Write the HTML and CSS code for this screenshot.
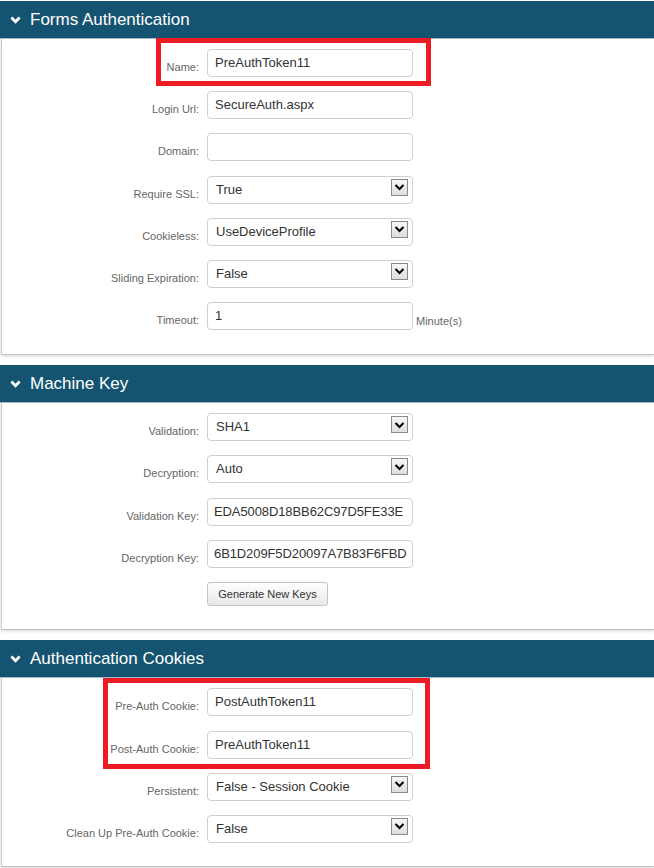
FILE: index.html
```html
<!DOCTYPE html>
<html>
<head>
<meta charset="utf-8">
<link rel="stylesheet" href="styles.css">
</head>
<body>
<div class="page">
  <section class="panel">
    <div class="panel-head">
      <svg class="chev" width="11" height="8" viewBox="0 0 11 8"><path d="M1.4 1.6 L5.5 5.7 L9.6 1.6" fill="none" stroke="#fff" stroke-width="2.8"/></svg>
      <span>Forms Authentication</span>
    </div>
    <div class="panel-body">
      <div class="row"><label class="lbl">Name:</label><div class="field">PreAuthToken11</div></div>
      <div class="row"><label class="lbl">Login Url:</label><div class="field">SecureAuth.aspx</div></div>
      <div class="row"><label class="lbl">Domain:</label><div class="field"></div></div>
      <div class="row"><label class="lbl">Require SSL:</label><div class="field select"><span class="val">True</span><span class="arrow"><svg width="15" height="14" viewBox="0 0 15 14"><path d="M3.5 5 L7.5 9 L11.5 5" fill="none" stroke="#000" stroke-width="2"/></svg></span></div></div>
      <div class="row"><label class="lbl">Cookieless:</label><div class="field select"><span class="val">UseDeviceProfile</span><span class="arrow"><svg width="15" height="14" viewBox="0 0 15 14"><path d="M3.5 5 L7.5 9 L11.5 5" fill="none" stroke="#000" stroke-width="2"/></svg></span></div></div>
      <div class="row"><label class="lbl">Sliding Expiration:</label><div class="field select"><span class="val">False</span><span class="arrow"><svg width="15" height="14" viewBox="0 0 15 14"><path d="M3.5 5 L7.5 9 L11.5 5" fill="none" stroke="#000" stroke-width="2"/></svg></span></div></div>
      <div class="row"><label class="lbl">Timeout:</label><div class="field">1</div><span class="unit">Minute(s)</span></div>
    </div>
  </section>

  <section class="panel">
    <div class="panel-head">
      <svg class="chev" width="11" height="8" viewBox="0 0 11 8"><path d="M1.4 1.6 L5.5 5.7 L9.6 1.6" fill="none" stroke="#fff" stroke-width="2.8"/></svg>
      <span>Machine Key</span>
    </div>
    <div class="panel-body">
      <div class="row"><label class="lbl">Validation:</label><div class="field select"><span class="val">SHA1</span><span class="arrow"><svg width="15" height="14" viewBox="0 0 15 14"><path d="M3.5 5 L7.5 9 L11.5 5" fill="none" stroke="#000" stroke-width="2"/></svg></span></div></div>
      <div class="row"><label class="lbl">Decryption:</label><div class="field select"><span class="val">Auto</span><span class="arrow"><svg width="15" height="14" viewBox="0 0 15 14"><path d="M3.5 5 L7.5 9 L11.5 5" fill="none" stroke="#000" stroke-width="2"/></svg></span></div></div>
      <div class="row"><label class="lbl">Validation Key:</label><div class="field key">EDA5008D18BB62C97D5FE33E</div></div>
      <div class="row"><label class="lbl">Decryption Key:</label><div class="field key">6B1D209F5D20097A7B83F6FBD</div></div>
      <div class="row"><span class="lbl"></span><button class="btn">Generate New Keys</button></div>
    </div>
  </section>

  <section class="panel">
    <div class="panel-head">
      <svg class="chev" width="11" height="8" viewBox="0 0 11 8"><path d="M1.4 1.6 L5.5 5.7 L9.6 1.6" fill="none" stroke="#fff" stroke-width="2.8"/></svg>
      <span>Authentication Cookies</span>
    </div>
    <div class="panel-body">
      <div class="row"><label class="lbl">Pre-Auth Cookie:</label><div class="field">PostAuthToken11</div></div>
      <div class="row"><label class="lbl">Post-Auth Cookie:</label><div class="field">PreAuthToken11</div></div>
      <div class="row"><label class="lbl">Persistent:</label><div class="field select"><span class="val">False - Session Cookie</span><span class="arrow"><svg width="15" height="14" viewBox="0 0 15 14"><path d="M3.5 5 L7.5 9 L11.5 5" fill="none" stroke="#000" stroke-width="2"/></svg></span></div></div>
      <div class="row"><label class="lbl">Clean Up Pre-Auth Cookie:</label><div class="field select"><span class="val">False</span><span class="arrow"><svg width="15" height="14" viewBox="0 0 15 14"><path d="M3.5 5 L7.5 9 L11.5 5" fill="none" stroke="#000" stroke-width="2"/></svg></span></div></div>
    </div>
  </section>

  <div class="mark mark-1"></div>
  <div class="mark mark-2"></div>
</div>
</body>
</html>
```

FILE: styles.css
```css
html, body {
  margin: 0;
  padding: 0;
  background: #fff;
  overflow: hidden;
}

.page {
  position: relative;
  padding: 1px 0 0 1px;
  font-family: "Liberation Sans", Arial, sans-serif;
}

.panel {
  margin-bottom: 10px;
}

.panel:nth-of-type(2) {
  margin-bottom: 10.5px;
}

.panel-head {
  height: 37px;
  background: #155470;
  border-bottom: 1px solid #a9bfca;
  color: #fff;
  font-size: 17px;
  display: flex;
  align-items: center;
  padding-left: 10px;
  margin-left: -1px;
}

.panel-head .chev {
  margin-right: 9px;
  margin-top: 1px;
}

.panel-body {
  border-left: 1px solid #c9c9c9;
  border-bottom: 1px solid #c4c4c4;
  box-shadow: 0 1px 3px rgba(0, 0, 0, 0.18);
  padding: 10px 0 23px 0;
  display: flex;
  flex-direction: column;
  gap: 14.2px;
}

.panel:first-of-type .panel-body {
  padding-bottom: 24px;
}

.row {
  display: flex;
  align-items: flex-start;
}

.lbl {
  width: 197px;
  flex: none;
  text-align: right;
  font-size: 11px;
  line-height: 13px;
  color: #666;
  padding-top: 12px;
  margin-right: 8px;
  box-sizing: border-box;
}

.field {
  width: 206px;
  height: 28px;
  box-sizing: border-box;
  border: 1px solid #cfcfcf;
  border-radius: 4px;
  background: #fff;
  font-size: 13px;
  line-height: 26px;
  color: #333;
  padding: 0 0 0 7px;
  white-space: nowrap;
  overflow: hidden;
}

.field.key {
  padding-left: 6px;
  letter-spacing: -0.1px;
}

.select {
  display: flex;
  align-items: flex-start;
  padding-left: 8px;
}

.select .val {
  flex: 1;
}

.arrow {
  width: 17px;
  height: 17px;
  box-sizing: border-box;
  border: 1px solid #8a8a8a;
  background: linear-gradient(#f7f7f7, #dedede);
  margin: 2px 4px 0 0;
  display: flex;
  align-items: center;
  justify-content: center;
}

.unit {
  font-size: 11px;
  line-height: 13px;
  color: #666;
  padding-top: 13px;
  margin-left: 3px;
}

.btn {
  width: 121px;
  height: 24px;
  border: 1px solid #c4c4c4;
  border-radius: 3px;
  background: linear-gradient(#ffffff, #e8e8e8);
  font-family: "Liberation Sans", Arial, sans-serif;
  font-size: 11px;
  color: #333;
  padding: 0;
}

.mark {
  position: absolute;
  border: 5px solid #ed1c24;
  box-sizing: border-box;
}

.mark-1 {
  left: 156px;
  top: 38px;
  width: 275px;
  height: 48px;
}

.mark-2 {
  left: 103px;
  top: 678px;
  width: 327px;
  height: 91px;
}
```
